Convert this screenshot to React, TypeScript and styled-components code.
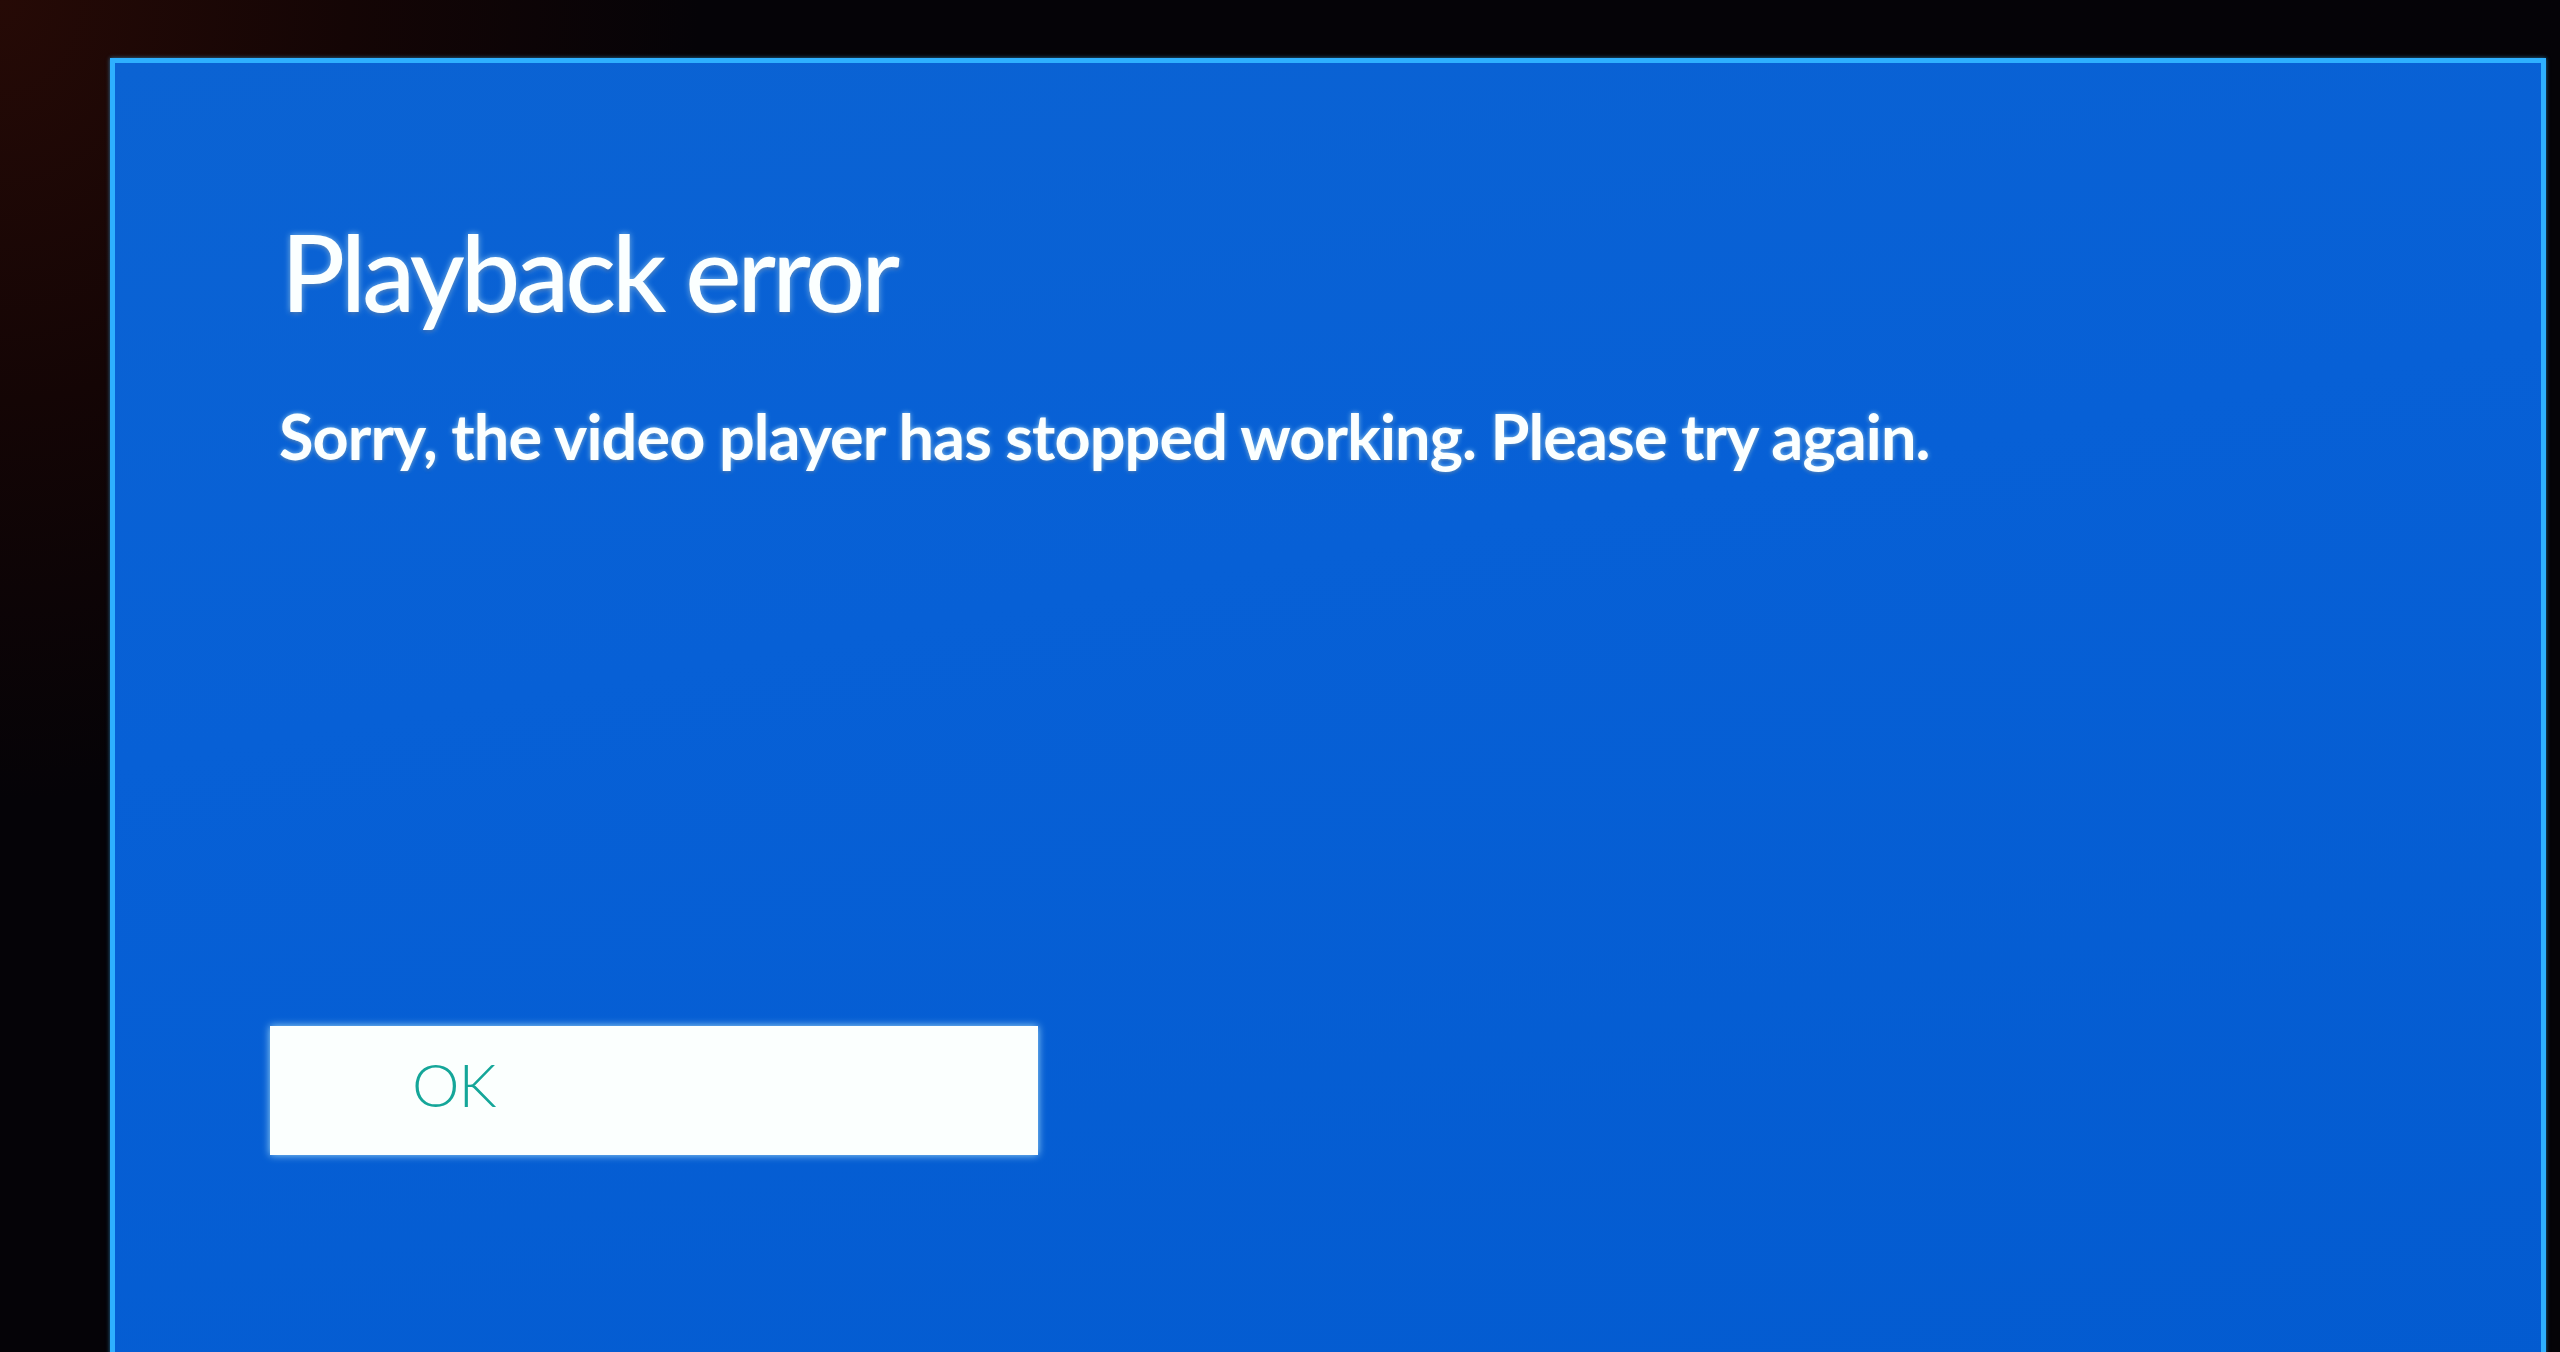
import React from "react";
import styled, { createGlobalStyle } from "styled-components";

const Global = createGlobalStyle`
  html, body {
    margin: 0;
    padding: 0;
    width: 2560px;
    height: 1352px;
    overflow: hidden;
    background:
      radial-gradient(ellipse 700px 800px at 0% 0%, #260a06 0%, #140505 50%, rgba(5,3,6,0) 100%),
      #050307;
  }
  #root { width: 2560px; height: 1352px; }
`;

const Room = styled.div`
  width: 2560px;
  height: 1352px;
  display: flex;
  padding: 58px 0 0 110px;
  box-sizing: border-box;
`;

const Screen = styled.section`
  width: 2436px;
  height: 1330px;
  flex: none;
  box-sizing: border-box;
  border: 5px solid #2eb0ff;
  border-bottom: none;
  box-shadow: 0 0 4px rgba(60, 180, 255, 0.6);
  background: linear-gradient(170deg, #0b63d3 0%, #0760d6 40%, #035bd0 100%);
  display: flex;
  flex-direction: column;
  align-items: flex-start;
  padding: 155px 0 0 166px;
  font-family: Lato, "Open Sans", sans-serif;
  color: #fbffff;
`;

const Title = styled.h1`
  margin: 0;
  font-size: 106px;
  line-height: 1;
  font-weight: 500;
  letter-spacing: -4px;
  text-shadow: 0 0 6px rgba(190, 235, 255, 0.7), 0 2px 3px rgba(0, 40, 120, 0.5);
`;

const Message = styled.p`
  margin: 80px 0 0 -2px;
  font-size: 63px;
  line-height: 1;
  font-weight: 700;
  letter-spacing: -0.9px;
  text-shadow: 0 0 5px rgba(190, 240, 255, 0.75), 0 2px 3px rgba(0, 40, 120, 0.5);
`;

const OkButton = styled.button`
  margin: 559px 0 0 -11px;
  width: 768px;
  height: 129px;
  box-sizing: border-box;
  border: none;
  background: #fbfffe;
  box-shadow: 0 0 8px rgba(200, 250, 255, 0.8);
  display: flex;
  align-items: center;
  padding: 0 0 14px 142px;
  font-family: Lato, "Open Sans", sans-serif;
  font-size: 60px;
  font-weight: 300;
  color: #14a699;
  letter-spacing: -1px;
  cursor: pointer;
`;

export default function App() {
  return (
    <>
      <Global />
      <Room>
        <Screen>
          <Title>Playback error</Title>
          <Message>Sorry, the video player has stopped working. Please try again.</Message>
          <OkButton>OK</OkButton>
        </Screen>
      </Room>
    </>
  );
}
